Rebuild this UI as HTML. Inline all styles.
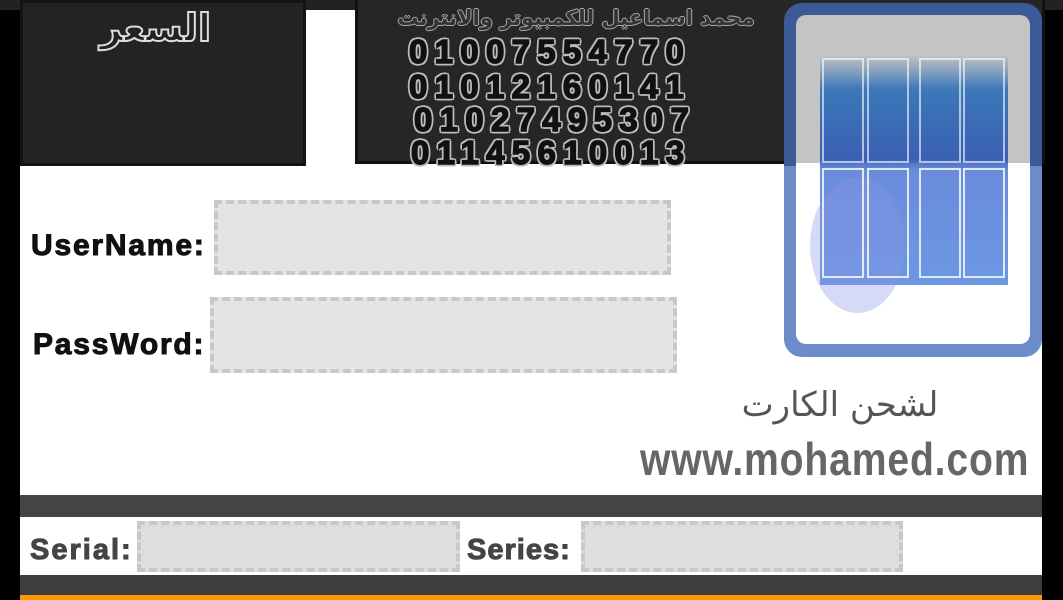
<!DOCTYPE html>
<html><head><meta charset="utf-8"><style>
*{margin:0;padding:0;box-sizing:border-box}
body{width:1063px;height:600px;overflow:hidden;background:#fff;position:relative;font-family:"Liberation Sans",sans-serif}
.a{position:absolute}
.num{position:absolute;font:bold 33px/1 "Liberation Sans",sans-serif;letter-spacing:7.3px;color:#111;-webkit-text-stroke:1.5px #111;text-shadow:2.5px 0 #bbb,-2.5px 0 #bbb,0 2.5px #bbb,0 -2.5px #bbb,2px 2px #bbb,-2px -2px #bbb,2px -2px #bbb,-2px 2px #bbb;white-space:nowrap}
.lbl{position:absolute;font:bold 30px/1 "Liberation Sans",sans-serif;letter-spacing:1.8px;white-space:nowrap}
.box{position:absolute;background:#e4e4e5;border:4px dashed #c8c8c8}
</style></head><body>
<div class="a" style="left:0;top:0;width:20px;height:600px;background:#000"></div>
<div class="a" style="left:1042px;top:3px;width:21px;height:597px;background:#000"></div>
<div class="a" style="left:0;top:0;width:1063px;height:10px;background:#222"></div>
<div class="a" style="left:20px;top:0;width:286px;height:166px;background:#232323;border:3px solid #1a1212"></div>
<div class="a" style="left:355px;top:0;width:690px;height:164px;background:#262626;border:3px solid #111;border-top:none"></div>
<div class="a" style="left:100px;top:6px;font:bold 38px 'DejaVu Sans',sans-serif;color:#222;-webkit-text-stroke:2px #ddd;white-space:nowrap" dir="rtl">السعر</div>
<div class="a" style="left:378px;top:6px;width:396px;text-align:center;font:bold 21px 'DejaVu Sans',sans-serif;color:#333;text-shadow:1px 0 #aaa,-1px 0 #aaa,0 1px #aaa,0 -1px #aaa;white-space:nowrap" dir="rtl">محمد اسماعيل للكمبيوتر والانترنت</div>
<div class="num" style="left:409px;top:35px">01007554770</div>
<div class="num" style="left:409px;top:70px">01012160141</div>
<div class="num" style="left:414px;top:103px">01027495307</div>
<div class="num" style="left:411px;top:136px">01145610013</div>
<div class="a" style="left:784px;top:3px;width:258px;height:354px;border-radius:18px;background:linear-gradient(#3d5a98 0,#3d5a98 46%,#6b8cc8 46%);"></div>
<div class="a" style="left:796px;top:15px;width:234px;height:329px;border-radius:10px;background:linear-gradient(#c4c4c4 0,#c4c4c4 45%,#fff 45%)"></div>
<div class="a" style="left:820px;top:55px;width:188px;height:230px;background:linear-gradient(#c4c4c4,#2d6fb8 15%,#2a55b0 45%,#5a7fd8 50%,#5b8ce0 100%);opacity:.9"></div>
<div class="a" style="left:810px;top:178px;width:95px;height:135px;border-radius:50%;background:rgba(140,150,230,.35)"></div>
<div class="a" style="left:822px;top:58px;width:42px;height:105px;border:2px solid rgba(255,255,255,.6)"></div>
<div class="a" style="left:867px;top:58px;width:42px;height:105px;border:2px solid rgba(255,255,255,.6)"></div>
<div class="a" style="left:919px;top:58px;width:42px;height:105px;border:2px solid rgba(255,255,255,.6)"></div>
<div class="a" style="left:963px;top:58px;width:42px;height:105px;border:2px solid rgba(255,255,255,.6)"></div>
<div class="a" style="left:822px;top:168px;width:42px;height:110px;border:2px solid rgba(255,255,255,.8)"></div>
<div class="a" style="left:867px;top:168px;width:42px;height:110px;border:2px solid rgba(255,255,255,.8)"></div>
<div class="a" style="left:919px;top:168px;width:42px;height:110px;border:2px solid rgba(255,255,255,.8)"></div>
<div class="a" style="left:963px;top:168px;width:42px;height:110px;border:2px solid rgba(255,255,255,.8)"></div>
<div class="lbl" style="left:31px;top:231px;color:#111;-webkit-text-stroke:1px #111">UserName:</div>
<div class="lbl" style="left:33px;top:330px;color:#111;-webkit-text-stroke:1px #111">PassWord:</div>
<div class="box" style="left:214px;top:200px;width:457px;height:75px"></div>
<div class="box" style="left:210px;top:297px;width:467px;height:76px"></div>
<div class="a" style="left:740px;top:385px;width:200px;text-align:center;font:34px 'DejaVu Sans',sans-serif;color:#555;white-space:nowrap" dir="rtl">لشحن الكارت</div>
<div class="a" style="left:640px;top:436px;font:bold 46px/1 'Liberation Sans',sans-serif;color:#666;transform:scaleX(.85);transform-origin:left;letter-spacing:1px;white-space:nowrap">www.mohamed.com</div>
<div class="a" style="left:20px;top:495px;width:1022px;height:22px;background:#444"></div>
<div class="lbl" style="left:30px;top:536px;color:#444;-webkit-text-stroke:1px #444;letter-spacing:2px;font-size:29px">Serial:</div>
<div class="lbl" style="left:467px;top:536px;color:#444;-webkit-text-stroke:1px #444;letter-spacing:1px;font-size:29px">Series:</div>
<div class="box" style="left:137px;top:521px;width:323px;height:51px;background:#dededf"></div>
<div class="box" style="left:581px;top:521px;width:322px;height:51px;background:#dededf"></div>
<div class="a" style="left:20px;top:575px;width:1022px;height:20px;background:#3d3d3d"></div>
<div class="a" style="left:20px;top:595px;width:1022px;height:5px;background:#f90"></div>
</body></html>
